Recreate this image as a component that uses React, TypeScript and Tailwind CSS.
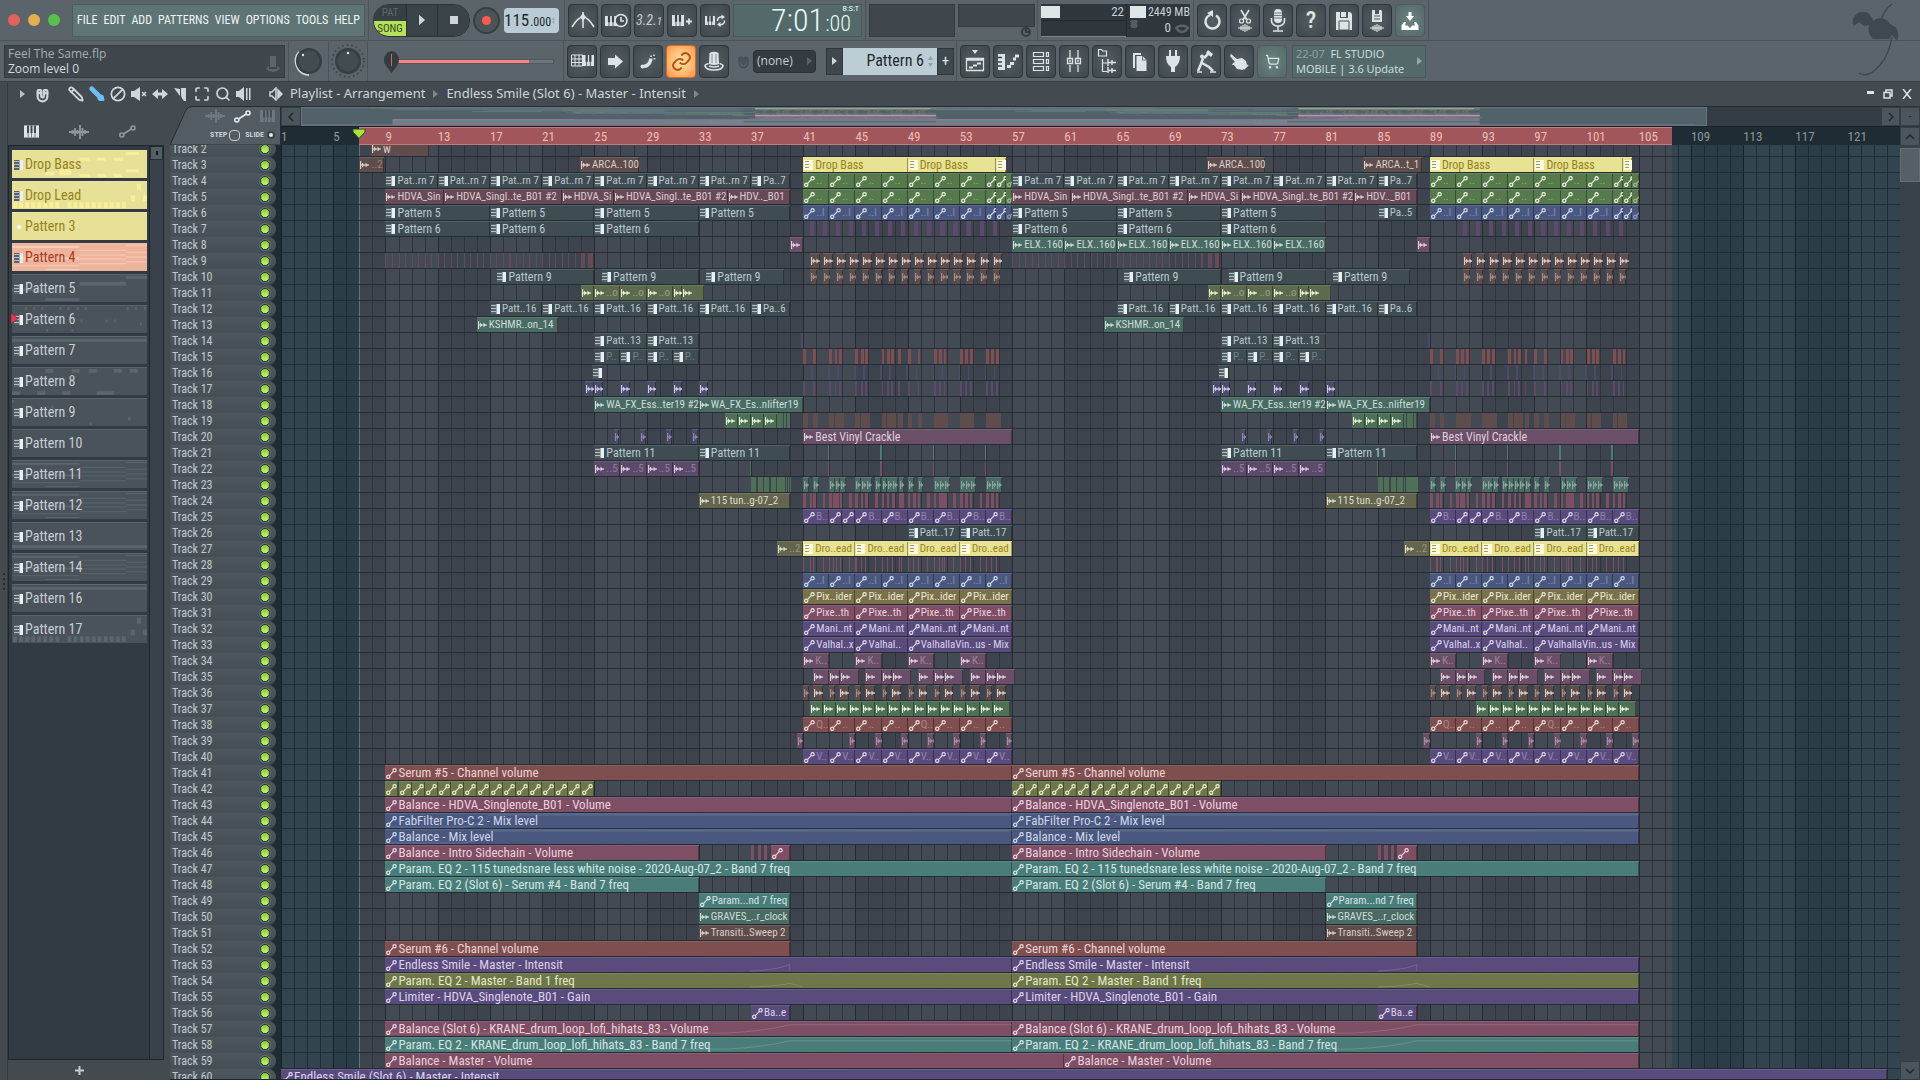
import React, { useState } from 'react';
import { Magnet, Search, Maximize, Ban, Pencil, Brush, ShoppingCart } from 'lucide-react';
import clsx from 'clsx';

const TOTAL_BARS = 124;
const REPEAT = 48;

type Icon = 'pat' | 'aud' | 'aut' | '';

interface Clip {
  track: number;
  start: number;
  len: number;
  tone: string;
  icon: Icon;
  label: string;
  dim?: boolean;
}

// Clip colours: background + text
const TONES: Record<string, string> = {
  slate: 'bg-[#3f4d53] text-[#b9c8cc]',
  brown: 'bg-[#5f4d4c] text-[#d6cbc6]',
  rose: 'bg-[#674a57] text-[#ddc9d0]',
  plum: 'bg-[#6b4f68] text-[#decfdd]',
  violet: 'bg-[#5b4a6a] text-[#d8cbe0]',
  indigo: 'bg-[#4c4c6a] text-[#c8c8e0]',
  purple: 'bg-[#5a4b7d] text-[#d9d2ea]',
  green: 'bg-[#577a4d] text-[#e4f0d8]',
  forest: 'bg-[#4f6f57] text-[#e0f5e0]',
  sea: 'bg-[#4a6b64] text-[#c9dcd6]',
  teal: 'bg-[#4a7d79] text-[#d0e6e2]',
  blue: 'bg-[#4a587f] text-[#ccd6ea]',
  olive: 'bg-[#6d774a] text-[#e4e8c8]',
  khaki: 'bg-[#78714c] text-[#ebe6cc]',
  moss: 'bg-[#5d6a4e] text-[#e8f0d0]',
  stone: 'bg-[#63654f] text-[#dcdcc8]',
  red: 'bg-[#7f4f50] text-[#ecd2d0]',
  magenta: 'bg-[#7d4e64] text-[#ecd0da]',
  yellow: 'bg-[#e8e393] text-[#96811c]',
};

// SVG fills for the overview strip
const FILLS: Record<string, string> = {
  slate: '#6a8790', brown: '#947a76', rose: '#947082', plum: '#a87ca4', violet: '#8a72a6', indigo: '#7676a4',
  purple: '#9884c0', green: '#96b878', forest: '#7aaa82', sea: '#7aa698', teal: '#84b8b4', blue: '#8494c0',
  olive: '#aab47c', khaki: '#bab080', moss: '#92a47c', stone: '#9a9c7c', red: '#b88484', magenta: '#b8809c', yellow: '#e8e393',
};

const clips: Clip[] = [];

const add = (track: number, tone: string, icon: Icon, items: [number, number, string?][], dim = false) => {
  items.forEach(([start, len, label]) => clips.push({ track, start, len, tone, icon, label: label ?? '', dim }));
};

// Adds the same clips in both halves of the song
const both = (track: number, tone: string, icon: Icon, items: [number, number, string?][], dim = false) => {
  add(track, tone, icon, items, dim);
  add(track, tone, icon, items.map(([s, l, t]) => [s + REPEAT, l, t] as [number, number, string?]), dim);
};

const every = (from: number, to: number, step: number, len: number, label = '') => {
  const out: [number, number, string?][] = [];
  for (let b = from; b < to; b += step) out.push([b, len, label]);
  return out;
};

const hits = (starts: number[], len: number) => starts.map((s) => [s, len] as [number, number]);

const KICK = [41, 41.75, 43, 43.4, 43.75, 45, 45.4, 45.75, 47, 47.4, 47.75, 48.25, 49, 49.75, 51, 51.4, 51.75, 53, 53.4, 53.75, 55, 55.4, 55.75];
const SNARE = [41.6, 42.9, 43.6, 44.9, 45.6, 46.9, 47.6, 48.9, 49.6, 50.9, 51.6, 52.9, 53.6, 54.9, 55.6];
const FAST = [41, 41.5, 41.75, 42.5, 43, 43.3, 43.5, 43.8, 44.5, 45, 45.4, 45.75, 46.5, 47, 47.4, 47.8, 48.3, 48.5, 49, 49.4, 49.75, 50.5, 51, 51.4, 51.6, 51.8, 52.5, 53, 53.4, 53.75, 54.5, 55, 55.4, 55.75];

add(2, 'brown', 'aud', [[7.9, 4.4, 'w']]);
add(3, 'brown', 'aud', [[7, 1.9, '..2']], true);
add(3, 'brown', 'aud', [[23.9, 4.5, 'ARCA..100'], [71.9, 4.5, 'ARCA..100'], [83.9, 4.5, 'ARCA..t_1']]);
both(3, 'yellow', 'pat', [[41, 8, 'Drop Bass'], [49, 6.8, 'Drop Bass'], [55.8, 0.7]]);
both(4, 'slate', 'pat', [...every(9, 37, 4, 4, 'Pat..rn 7'), [37, 3, 'Pa..7']]);
both(5, 'rose', 'aud', [[9, 4.5, 'HDVA_Sin'], [13.5, 9, 'HDVA_Singl..te_B01 #2'], [22.5, 4, 'HDVA_Si'], [26.5, 8.7, 'HDVA_Singl..te_B01 #2'], [35.2, 4.8, 'HDV.._B01']]);
for (const t of [4, 5]) both(t, 'green', 'aut', [...every(41, 55, 2, 2, '..'), [55, 0.8], [55.8, 0.7], [56.5, 0.5]], true);
both(6, 'blue', 'aut', [...every(41, 55, 2, 2, '..l'), [55, 0.8], [55.8, 0.7], [56.5, 0.5]], true);
add(6, 'slate', 'pat', [[9, 8, 'Pattern 5'], [17, 8, 'Pattern 5'], [25, 8, 'Pattern 5'], [33, 7, 'Pattern 5']]);
add(6, 'slate', 'pat', [[57, 8, 'Pattern 5'], [65, 8, 'Pattern 5'], [73, 8, 'Pattern 5'], [85, 3, 'Pa..5']]);
both(7, 'slate', 'pat', every(9, 33, 8, 8, 'Pattern 6'));
add(7, 'violet', '', [...every(41.5, 56, 1, 0.32), ...every(91.5, 104, 1, 0.32)]);
both(8, 'plum', 'aud', [[40, 1]]);
add(8, 'sea', 'aud', every(57, 81, 4, 4, 'ELX..160'));
both(9, 'rose', '', [...every(9, 24, 0.5, 0.08), [24, 0.3], [24.5, 0.45]]);
add(9, 'brown', 'aud', [...every(41.5, 56, 1, 0.75), ...every(91.5, 104, 1, 0.75)]);
add(10, 'brown', 'aud', [...every(41.5, 56, 1, 0.55), ...every(91.5, 104, 1, 0.55)], true);
both(10, 'slate', 'pat', [[17.5, 7.5, 'Pattern 9'], [25.5, 7.5, 'Pattern 9'], [33.5, 6, 'Pattern 9']]);
both(11, 'moss', 'aud', [[24, 1], [25, 2, '..o'], [27, 2, '..o'], [29, 2, '..o'], [31, 0.7], [31.7, 1.7]], true);
both(12, 'slate', 'pat', [...every(17, 37, 4, 4, 'Patt..16'), [37, 3, 'Pa..6']]);
both(13, 'sea', 'aud', [[16, 6.2, 'KSHMR..on_14']]);
both(14, 'slate', 'pat', every(25, 33, 4, 4, 'Patt..13'));
both(14, 'indigo', '', [[40.85, 0.12]]);
both(15, 'slate', 'pat', every(25, 33, 2, 2, 'P..'), true);
both(15, 'red', '', hits(KICK, 0.22));
both(16, 'slate', 'pat', [[24.8, 0.8]]);
both(16, 'indigo', '', hits(SNARE, 0.12));
both(17, 'indigo', 'aud', [[24.3, 0.7], [25, 0.7], [27, 0.7], [29, 0.7], [31, 0.7], [33, 0.7]]);
both(17, 'violet', '', hits(KICK, 0.14));
both(18, 'sea', 'aud', [[25, 8, 'WA_FX_Ess..ter19 #2'], [33, 8, 'WA_FX_Es..nlifter19']]);
both(19, 'forest', 'aud', every(35, 39, 1, 1));
both(19, 'forest', '', every(39, 40, 0.25, 0.2));
both(19, 'brown', '', hits(KICK, 0.36));
both(20, 'indigo', 'aud', every(26.5, 33, 2, 0.42), true);
both(20, 'plum', 'aud', [[41, 16, 'Best Vinyl Crackle']]);
both(21, 'slate', 'pat', [[25, 8, 'Pattern 11'], [33, 7, 'Pattern 11']]);
both(21, 'teal', '', hits([42.9, 46.9, 50.9, 54.9], 0.1));
both(22, 'violet', 'aud', every(25, 33, 2, 2, '..5'), true);
both(22, 'forest', '', [[36.95, 0.08]]);
both(22, 'magenta', '', hits([42.9, 46.9, 50.9, 54.9], 0.1));
both(23, 'forest', '', [...every(37, 39, 0.5, 0.4), ...every(39, 40, 0.16, 0.12)]);
both(23, 'sea', 'aud', hits([41, 41.75, 42.95, 43.4, 43.8, 45, 45.4, 45.8, 46.5, 47, 47.4, 47.8, 48.3, 49, 49.75, 51, 51.4, 51.8, 53, 53.4, 53.8, 55, 55.4, 55.8], 0.45), true);
both(24, 'stone', 'aud', [[33, 7, '115 tun..g-07_2']]);
both(24, 'magenta', '', hits(FAST, 0.2));
both(25, 'purple', 'aut', [[41, 2, 'B..'], [43, 1], [44, 1], ...every(45, 57, 2, 2, 'B..')], true);
both(26, 'slate', 'pat', every(49, 57, 4, 4, 'Patt..17'));
both(27, 'stone', 'aud', [[39, 2, '..2']], true);
both(27, 'yellow', 'pat', every(41, 57, 4, 4, 'Dro..ead'));
both(28, 'magenta', '', hits(FAST, 0.08));
both(29, 'blue', 'aut', every(41, 57, 2, 2, '..l'), true);
both(30, 'khaki', 'aut', every(41, 57, 4, 4, 'Pix..ider'));
both(31, 'magenta', 'aut', every(41, 57, 4, 4, 'Pixe..th'));
both(32, 'purple', 'aut', every(41, 57, 4, 4, 'Mani..nt'));
both(33, 'purple', 'aut', [[41, 4, 'Valhal..x'], [45, 4, 'Valhal..'], [49, 8, 'ValhallaVin..us - Mix']]);
both(34, 'plum', 'aud', every(41, 57, 4, 2, 'K..'), true);
for (let b = 41; b < 57; b += 4) {
  both(35, 'plum', 'aud', [[b + 0.75, 1.25], [b + 2, 0.8], [b + 2.8, 1.45]]);
}
for (let b = 41; b < 57; b += 2) {
  both(36, 'brown', 'aud', [[b, 0.45]], true);
  both(36, 'brown', 'aud', [[b + 0.75, 0.75]]);
}
add(37, 'forest', 'aud', [...every(41.5, 55, 1, 1), [55.5, 1.3], ...every(92.5, 103, 1, 1), [103.5, 1.3]]);
both(38, 'red', 'aut', every(41, 57, 8, 2, 'Q..'), true);
both(38, 'red', 'aut', [...every(43, 49, 2, 2, '..'), ...every(51, 57, 2, 2, '..')], true);
both(39, 'plum', 'aud', [[40.5, 0.5], [44.5, 0.5], ...every(46.5, 57, 2, 0.5)], true);
both(40, 'purple', 'aut', every(41, 57, 2, 2, 'V..'), true);
both(41, 'red', 'aut', [[9, 48, 'Serum #5 - Channel volume']]);
both(42, 'olive', 'aut', every(9, 25, 1, 1));
both(43, 'magenta', 'aut', [[9, 48, 'Balance - HDVA_Singlenote_B01 - Volume']]);
both(44, 'blue', 'aut', [[9, 48, 'FabFilter Pro-C 2 - Mix level']]);
both(45, 'blue', 'aut', [[9, 48, 'Balance - Mix level']]);
both(46, 'magenta', 'aut', [[9, 24, 'Balance - Intro Sidechain - Volume'], [38.5, 1.5]]);
both(46, 'magenta', '', [[37, 0.25], [37.5, 0.25], [38, 0.25]]);
both(47, 'teal', 'aut', [[9, 48, 'Param. EQ 2 - 115 tunedsnare less white noise - 2020-Aug-07_2 - Band 7 freq']]);
both(48, 'teal', 'aut', [[9, 24, 'Param. EQ 2 (Slot 6) - Serum #4 - Band 7 freq']]);
both(49, 'teal', 'aut', [[33, 7, 'Param...nd 7 freq']]);
both(50, 'sea', 'aud', [[33, 7, 'GRAVES_..r_clock']]);
both(51, 'brown', 'aud', [[33, 7, 'Transiti..Sweep 2']]);
both(52, 'red', 'aut', [[9, 31, 'Serum #6 - Channel volume']]);
both(53, 'purple', 'aut', [[9, 48, 'Endless Smile - Master - Intensit']]);
both(54, 'olive', 'aut', [[9, 48, 'Param. EQ 2 - Master - Band 1 freq']]);
both(55, 'purple', 'aut', [[9, 48, 'Limiter - HDVA_Singlenote_B01 - Gain']]);
both(56, 'purple', 'aut', [[37, 3, 'Ba..e']]);
both(57, 'magenta', 'aut', [[9, 48, 'Balance (Slot 6) - KRANE_drum_loop_lofi_hihats_83 - Volume']]);
both(58, 'teal', 'aut', [[9, 48, 'Param. EQ 2 - KRANE_drum_loop_lofi_hihats_83 - Band 7 freq']]);
add(59, 'magenta', 'aut', [[9, 52, 'Balance - Master - Volume'], [61, 44, 'Balance - Master - Volume']]);
add(60, 'purple', 'aut', [[1, 123, 'Endless Smile (Slot 6) - Master - Intensit']]);

// Automation envelopes, in a 48 x 15 box
const CURVES: Record<number, string> = {
  44: 'M0 14H6Q7.500 12 8 1H48',
  45: 'M0 14H6Q7.500 12 8 1H48',
  53: 'M28 14Q30 13 31 7V14',
  54: 'M28 14Q30 13 31 10L32 14',
  57: 'M0 12H26Q29 10 31 3H48',
  58: 'M0 12H26Q29 10 31 3H48',
};

const tracks = Array.from({ length: 59 }, (_, i) => i + 2);

/* ---------- pattern browser ---------- */

type Note = [number, number, number, number];

const chords: Note[] = [
  [0, 2, 67, 2], [0, 14, 67, 2], [0, 22, 67, 1], [67, 6, 46, 1], [67, 11, 46, 1], [67, 15, 46, 1], [67, 20, 46, 1],
  [113, 1, 21, 1], [113, 8, 21, 1], [113, 13, 21, 1], [113, 18, 21, 1], [33, 26, 34, 1],
];
const lead: Note[] = [
  ...Array.from({ length: 19 }, (_, i) => [1 + i * 6, 21, 4, 6] as Note).filter((_, i) => i !== 8),
  [118, 14, 4, 6], [124, 2, 4, 6], [130, 14, 4, 6],
];
const patterns: { name: string; tone: 'yellow' | 'salmon' | 'slate'; notes: Note[] }[] = [
  { name: 'Drop Bass', tone: 'yellow', notes: [[0, 14, 9, 3], [33, 22, 9, 3], [47, 19, 12, 6], [67, 7, 10, 3], [84, 7, 9, 3], [101, 7, 9, 3], [113, 1, 13, 3], [67, 24, 10, 3], [84, 24, 9, 3], [101, 24, 8, 3], [113, 19, 13, 3]] },
  { name: 'Drop Lead', tone: 'yellow', notes: lead },
  { name: 'Pattern 3', tone: 'yellow', notes: [] },
  { name: 'Pattern 4', tone: 'salmon', notes: chords },
  { name: 'Pattern 5', tone: 'slate', notes: [[0, 14, 33, 3], [33, 24, 34, 3], [67, 7, 46, 4], [113, 1, 21, 3]] },
  { name: 'Pattern 6', tone: 'slate', notes: [...[13, 21, 29, 47, 55, 64, 72, 114, 122, 131].map((x) => [x, 1, 2, 3] as Note), [68, 14, 2, 3], [93, 14, 2, 3], [101, 14, 2, 3], [127, 17, 2, 3], [26, 17, 2, 3], [34, 24, 2, 3], [59, 24, 2, 3]] },
  { name: 'Pattern 7', tone: 'slate', notes: [[0, 2, 134, 3]] },
  { name: 'Pattern 8', tone: 'slate', notes: [[33, 1, 8, 4], [59, 1, 8, 4], [76, 1, 8, 4], [101, 1, 8, 4], [117, 1, 8, 4], [0, 24, 8, 4], [25, 24, 8, 4], [50, 24, 8, 4], [84, 24, 17, 4]] },
  { name: 'Pattern 9', tone: 'slate', notes: [[0, 1, 2, 3], [39, 7, 2, 3], [115, 19, 3, 3], [77, 24, 2, 3]] },
  { name: 'Pattern 10', tone: 'slate', notes: [] },
  { name: 'Pattern 11', tone: 'slate', notes: chords },
  { name: 'Pattern 12', tone: 'slate', notes: chords },
  { name: 'Pattern 13', tone: 'slate', notes: [[0, 23, 134, 3]] },
  { name: 'Pattern 14', tone: 'slate', notes: chords },
  { name: 'Pattern 16', tone: 'slate', notes: [[0, 2, 134, 3]] },
  { name: 'Pattern 17', tone: 'slate', notes: lead },
];

/* ---------- icons ---------- */

const PatGlyph = () => (
  <svg viewBox="0 0 9 10" className="w-[9px] h-[10px] shrink-0">
    <path d="M0 0h6v10H0z" fill="#56646a" />
    <path d="M0 1.500h5M0 4.500h5M0 7.500h5" stroke="#b4c0c5" />
    <path d="M5.500 0H9v10H5.500z" fill="#e8f0f2" />
  </svg>
);

// Same glyph for clips on a bright background
const PatGlyphLight = () => (
  <svg viewBox="0 0 9 10" className="w-[9px] h-[10px] shrink-0">
    <path d="M0 0h9v10H0z" fill="#fffbe0" />
    <path d="M1 1.500h4M1 4.500h4M1 7.500h4" stroke="#a39a5c" />
  </svg>
);

const AudGlyph = () => (
  <svg viewBox="0 0 9 8" className="w-[9px] h-2 shrink-0">
    <path d="M.6 0v8" stroke="currentColor" strokeWidth="1.2" />
    <path d="M1 4h8" stroke="currentColor" strokeWidth="1.2" />
    <path d="M2 1.500L4.500 4L2 6.500zM5.500 1.500L8 4L5.500 6.500z" fill="currentColor" />
  </svg>
);

const AutGlyph = () => (
  <svg viewBox="0 0 11 11" className="w-[11px] h-[11px] shrink-0" fill="none" stroke="currentColor" strokeWidth="1.3">
    <circle cx="2.2" cy="8.8" r="1.6" />
    <circle cx="8.6" cy="2.2" r="1.6" />
    <path d="M3.4 7.6L7.4 3.4" />
  </svg>
);

const Piano = ({ x, y, w, h }: { x: number; y: number; w: number; h: number }) => (
  <g>
    <rect x={x} y={y} width={w} height={h} fill="#dde4e6" stroke="none" />
    <path
      d={`M${x + w / 3} ${y}v${h * 0.62}M${x + (2 * w) / 3} ${y}v${h * 0.62}`}
      stroke="#3b4448"
      strokeWidth="2.2"
    />
    <path d={`M${x + w / 3} ${y}v${h}M${x + (2 * w) / 3} ${y}v${h}`} stroke="#3b4448" strokeWidth=".8" />
  </g>
);

const Art = ({ children }: { children: React.ReactNode }) => (
  <svg viewBox="0 0 30 33" className="w-[30px] h-[33px] shrink-0" fill="none" stroke="#dde4e6" strokeWidth="1.6">
    {children}
  </svg>
);

const F = '#dde4e6';

const ToolButton = ({ label, tone = 'dark', children }: { label: string; tone?: string; children: React.ReactNode }) => (
  <button
    aria-label={label}
    className={clsx(
      'w-[30px] h-[33px] shrink-0 rounded-sm border flex items-center justify-center overflow-hidden',
      tone === 'dark' && 'bg-[#454e52] border-[#2f373c] bg-radial from-[#555e62] to-[#3e474b]',
      tone === 'teal' && 'border-[#4a5b5d] bg-radial from-[#6c8583] to-[#546867]',
      tone === 'orange' && 'border-[#d96a1c] bg-radial from-[#ffe9a6] to-[#fb9545]'
    )}
  >
    {children}
  </button>
);

const Divider = () => <div className="w-px self-stretch bg-[#4b5459] shrink-0" />;

const Arrow = ({ className }: { className?: string }) => (
  <svg viewBox="0 0 5 8" className={clsx('w-[5px] h-2 shrink-0', className)} fill="currentColor"><path d="M0 0L5 4L0 8z" /></svg>
);

const Wave = ({ className }: { className?: string }) => (
  <svg viewBox="0 0 20 14" className={className} stroke="currentColor" strokeWidth="1.8">
    <path d="M0 7h20M3.500 5v4M6 3v8M8.500 5v4M11 0v14M13.500 3v8M16 5v4" />
  </svg>
);

const Keys = ({ className }: { className?: string }) => (
  <svg viewBox="0 0 16 13" className={className} fill="currentColor">
    <path d="M0 0h16v13H0z" />
    <path d="M3.200 0h2.200v8H3.200zM6.900 0h2.200v8H6.900zM10.600 0h2.200v8h-2.200z" fill="#444d52" />
    <path d="M4 8h.7v5H4zM7.700 8h.7v5h-.7zM11.400 8h.7v5h-.7z" fill="#444d52" />
  </svg>
);

const Nodes = ({ className }: { className?: string }) => (
  <svg viewBox="0 0 17 13" className={className} fill="none" stroke="currentColor" strokeWidth="1.6">
    <circle cx="2.800" cy="10" r="2" />
    <circle cx="14" cy="3" r="2" />
    <path d="M4.500 9L12.300 4" />
  </svg>
);

/* ---------- top bars ---------- */

const TransportRow = () => (
  <div className="flex items-center h-[41px] border-b border-[#4b5459]">
    <div className="w-[368px] shrink-0 flex items-center pl-2 gap-2">
      {['bg-[#e0635a]', 'bg-[#e5b04c]', 'bg-[#57c14e]'].map((c) => (
        <button key={c} aria-label="Window" className={clsx('size-3 rounded-full', c)} />
      ))}
      <nav className="ml-1 w-[293px] h-[33px] bg-[#5f7474] border border-[#4c5d5e] flex items-center justify-between px-1 text-[12px] text-[#eff7f6]">
        {['FILE', 'EDIT', 'ADD', 'PATTERNS', 'VIEW', 'OPTIONS', 'TOOLS', 'HELP'].map((m) => (
          <button key={m}>{m}</button>
        ))}
      </nav>
    </div>
    <Divider />
    <div className="w-[195px] shrink-0 flex items-center pl-1">
      <div className="flex h-[33px] rounded-2xl overflow-hidden border border-[#2c3338]">
        <button className="w-[32px] flex flex-col text-[11px] leading-4 text-[#5f686d] bg-[#363f44]">
          <span className="w-full h-4">PAT</span>
          <span className="w-full h-4 bg-[#b4e35a] text-[#33481a]">SONG</span>
        </button>
        <button aria-label="Play" className="w-[31px] bg-[#3a4348] border-l border-[#2c3338] flex items-center justify-center">
          <svg viewBox="0 0 8 12" className="w-[7px] h-3" fill="#cfd6d8"><path d="M0 0L7 6L0 12z" /></svg>
        </button>
        <button aria-label="Stop" className="w-[32px] bg-[#3a4348] border-l border-[#2c3338] flex items-center justify-center">
          <span className="size-2 bg-[#cfd6d8]" />
        </button>
      </div>
      <button aria-label="Record" className="ml-[3px] size-[27px] rounded-full bg-[#4b5459] border-2 border-[#353e43] flex items-center justify-center">
        <span className="size-[9px] rounded-full bg-[#ff5a50]" />
      </button>
      <div className="ml-1 w-[55px] h-[25px] rounded bg-[#b9cbd4] text-[#1f2a30] flex items-baseline justify-end gap-px pr-1">
        <span className="text-[17px] leading-[25px]">115</span>
        <span className="text-[12px]">.000</span>
        <svg viewBox="0 0 5 11" className="w-[5px] h-[11px] self-center" fill="#8fa0a8"><path d="M2.500 0L5 4H0zM0 7h5L2.500 11z" /></svg>
      </div>
    </div>
    <Divider />
    <div className="flex items-center gap-[3px] pl-[3px] pr-[3px] shrink-0">
      <ToolButton label="Metronome">
        <Art>
          <path d="M4 23Q10 13 15 13Q20 13 26 23" />
          <path d="M15 8v16" />
          <path d="M15 9l3 4l-3 4l-3-4z" fill={F} stroke="none" />
        </Art>
      </ToolButton>
      <ToolButton label="Wait for input">
        <Art>
          <Piano x={4} y={12} w={12} h={10} />
          <circle cx="20" cy="16.500" r="6" fill="#444d52" />
          <path d="M20 13v4h3" />
        </Art>
      </ToolButton>
      <ToolButton label="Countdown">
        <span className="italic text-[14px] text-[#c6cdd0]">3.2.<span className="text-[11px]">1</span></span>
      </ToolButton>
      <ToolButton label="Overdub">
        <Art>
          <Piano x={5} y={11} w={12} h={11} />
          <path d="M19 17.500h6M22 14.500v6" strokeWidth="1.800" />
        </Art>
      </ToolButton>
      <ToolButton label="Loop record">
        <Art>
          <Piano x={5} y={12} w={10} h={9} />
          <path d="M17.500 17v-1a3.800 3.800 0 0 1 5-3M24.500 16.500v1a3.800 3.800 0 0 1-5 3" />
          <path d="M21.500 10.500l3.500 2.500l-3.500 2.500zM20.500 18l-3.500 2.500l3.500 2.500z" fill={F} stroke="none" />
        </Art>
      </ToolButton>
      <div className="w-[129px] h-[33px] bg-[#54696a] border border-[#48595b] text-[#e6fbf8] flex items-start justify-end gap-px pr-[2px]">
        <span className="text-[32px] leading-[31px] font-light">7:01</span>
        <span className="flex flex-col items-end">
          <span className="text-[8px] leading-[8px]">B:S:T</span>
          <span className="text-[22px] leading-[22px] font-light pr-2">:00</span>
        </span>
      </div>
    </div>
    <Divider />
    <div className="flex items-start gap-[3px] pl-[3px] w-[171px] h-[33px] shrink-0">
      <div className="w-[86px] h-[33px] bg-[#3f474d] border border-[#343c42]" />
      <div className="w-[77px] flex flex-col items-end">
        <div className="w-full h-[23px] bg-[#3f474d] border border-[#343c42]" />
        <svg viewBox="0 0 12 10" className="w-3 h-[10px] mr-[3px]" fill="none" stroke="#343c42" strokeWidth="2">
          <circle cx="6" cy="5" r="4" />
          <path d="M6 1v4h4" />
        </svg>
      </div>
    </div>
    <Divider />
    <div className="pl-[3px] pr-[3px] shrink-0">
      <div className="flex w-[149px] h-[33px] bg-[#2f363c] text-[#c9d3d6] text-[13px] leading-4">
        <div className="w-[86px] flex flex-col border-r border-[#242a2f]">
          <div className="flex justify-between h-4 pr-[2px]"><span className="w-[19px] h-3 mt-[2px] bg-[#dfe6e8]" />22</div>
          <div className="flex-1 border-t border-[#242a2f] border-b border-b-[#7c868a]" />
        </div>
        <div className="flex-1 pl-[3px]">
          <div className="flex justify-between h-4"><span className="w-4 h-3 mt-[2px] bg-[#dfe6e8] shrink-0" /><span className="text-[12px] whitespace-nowrap">2449 MB</span></div>
          <div className="flex items-center justify-end gap-1 h-[17px]">
            <svg viewBox="0 0 8 8" className="size-2 mr-auto mb-2" fill="#525c62"><path d="M1 0h6v8H1zM0 1h8v1H0zM0 5h8v1H0z" /></svg>
            0
            <svg viewBox="0 0 14 9" className="w-[14px] h-[9px] mr-px" fill="none" stroke="#59636a" strokeWidth="2.500"><path d="M1 4Q4 1 7 2Q10 1 13 4Q10 8 7 8Q4 8 1 4z" /></svg>
          </div>
        </div>
      </div>
    </div>
    <Divider />
    <div className="flex items-center gap-[3px] pl-[3px] pr-[3px] shrink-0 text-[#dde4e6]">
      <ToolButton label="Undo">
        <Art>
          <path d="M19 11.500a7 7 0 1 1-6-.5" strokeWidth="2.400" />
          <path d="M10 9l6-3v7z" fill={F} stroke="none" />
        </Art>
      </ToolButton>
      <ToolButton label="Cut">
        <Art>
          <path d="M11 6l6 10M19 6l-6 10" />
          <circle cx="11.500" cy="17" r="2" strokeWidth="1.200" /><circle cx="18.500" cy="17" r="2" strokeWidth="1.200" />
          <path d="M8 24h14M11 22v4M13 21v6M15 20v8M17 21v6M19 22v4" strokeWidth="1.200" />
        </Art>
      </ToolButton>
      <ToolButton label="Record audio">
        <Art>
          <rect x="11" y="5" width="8" height="14" rx="4" fill={F} stroke="none" />
          <path d="M11 9h8M11 11.500h8M11 14h8" stroke="#59636a" strokeWidth=".8" />
          <path d="M8.500 14v3a6.500 5 0 0 0 13 0v-3M15 22v4M10 27h10" />
        </Art>
      </ToolButton>
      <ToolButton label="Help"><span className="text-[24px] leading-none font-medium">?</span></ToolButton>
      <ToolButton label="Save">
        <Art>
          <path d="M7 8h4v6h8V8h2l2 2v16H7z" fill={F} stroke="none" />
          <path d="M12 8h5v5h-5z" fill={F} stroke="none" />
          <path d="M10 17h10v9H10z" stroke="#4a5357" strokeWidth="1" />
        </Art>
      </ToolButton>
      <ToolButton label="Save new version">
        <Art>
          <path d="M10 6h3v4h4V6h2l1 1v11H10z" fill={F} stroke="none" />
          <path d="M12 12h6M12 15h6" stroke="#4a5357" strokeWidth="1" />
          <path d="M8 24h14M11 22v4M13 21v6M15 20v8M17 21v6M19 22v4" strokeWidth="1.200" />
        </Art>
      </ToolButton>
      <ToolButton label="Export" tone="teal">
        <Art>
          <path d="M15 8v5" stroke="#fff" strokeWidth="3" />
          <path d="M11 12h8l-4 5z" fill="#fff" stroke="none" />
          <path d="M9 18l-2.500 3.500V26h17v-4.500L21 18h-2l1 3.500h-3l-1 2h-2l-1-2h-3L11 18z" fill="#fff" stroke="none" />
        </Art>
      </ToolButton>
    </div>
    <Divider />
  </div>
);

const Knob = ({ ring }: { ring: boolean }) => (
  <svg viewBox="0 0 36 36" className="size-9">
    {ring ? (
      <circle cx="18" cy="18" r="16" fill="none" stroke="#3c454a" strokeWidth="2" strokeDasharray="1.500 3.100" />
    ) : (
      <path d="M8 9A14 14 0 0 0 18 32" fill="none" stroke="#ccd5d8" strokeWidth="2" />
    )}
    <circle cx="18" cy="18" r="13" fill="#363f44" />
    <circle cx="18" cy="18" r="10.500" fill="#434c51" />
    <circle cx={ring ? 18 : 12} cy={ring ? 10 : 12} r="1.200" fill="#dde4e6" />
  </svg>
);

const PatternRow = () => {
  const [pos, setPos] = useState(5);
  return (
    <div className="flex items-center h-[41px] border-b border-[#3a4348]">
      <div className="w-[288px] shrink-0 pl-1">
        <div className="relative w-[281px] h-[33px] bg-[#3f474c] border border-[#343c41] pl-[3px] text-[12px] leading-[15px] font-['Open_Sans',sans-serif]">
          <p className="text-[#a3adb1]">Feel The Same.flp</p>
          <p className="text-[#d3dbde]">Zoom level 0</p>
          <svg viewBox="0 0 14 18" className="absolute right-1 bottom-1 w-[14px] h-[18px]" fill="#5b656a"><path d="M4 1h6v11H4zM0 14q2-3 3-3v3h8v-3q2 0 3 3q-7 6-14 0" /></svg>
        </div>
      </div>
      <Divider />
      <div className="w-[39px] shrink-0 flex justify-center"><Knob ring={false} /></div>
      <Divider />
      <div className="w-[38px] shrink-0 flex justify-center"><Knob ring /></div>
      <Divider />
      <div className="w-[195px] shrink-0 relative pl-4 pr-[9px]">
        <div className="h-[5px] bg-[#6d767b] border border-[#4f585d] flex"><div className="w-[86%] bg-[#ff8481]" /></div>
        <input
          type="range"
          aria-label="Song position"
          min={0}
          max={100}
          value={pos}
          onChange={(e) => setPos(Number(e.target.value))}
          className="absolute inset-x-4 -top-2 h-5 opacity-0"
        />
        <svg viewBox="0 0 15 22" className="absolute left-4 -top-2 w-[15px] h-[22px] pointer-events-none">
          <ellipse cx="7.500" cy="9" rx="7.500" ry="9" fill="#343c41" />
          <path d="M3 16h9l-4.500 6z" fill="#343c41" />
          <path d="M7.500 3v12" stroke="#c96a68" />
        </svg>
      </div>
      <Divider />
      <div className="flex items-center gap-[3px] pl-[3px] w-[392px] shrink-0">
        <ToolButton label="Typing keyboard">
          <Art>
            <path d="M4.500 10h11v11h-11zM8 10v11M12 10v11M4 14h12M4 17.500h12" strokeWidth="1" />
            <Piano x={16} y={10} w={11} h={11} />
          </Art>
        </ToolButton>
        <ToolButton label="Step edit"><Art><path d="M8 13h7V9.500l8 7l-8 7V20H8z" fill={F} stroke="none" /></Art></ToolButton>
        <ToolButton label="Note glide">
          <Art>
            <path d="M11 21.500q6-1 7-8" strokeWidth="3.500" />
            <circle cx="9.500" cy="21.500" r="2" fill={F} stroke="none" />
            <path d="M18 10.500v1.500M21 9.500v1.500M21.500 13v1.500" />
          </Art>
        </ToolButton>
        <ToolButton label="Link controllers" tone="orange">
          <svg viewBox="0 0 24 24" className="size-[21px]" fill="none" stroke="#b8500f" strokeWidth="2.200">
            <path d="M10 13a5 5 0 0 0 7.500.5l3-3a5 5 0 0 0-7-7l-1.700 1.700" />
            <path d="M14 11a5 5 0 0 0-7.500-.5l-3 3a5 5 0 0 0 7 7l1.700-1.700" />
          </svg>
        </ToolButton>
        <ToolButton label="Multilink">
          <Art>
            <path d="M10.500 8q4.500-2.500 9 0l.5 11q-5 2-10 0z" fill={F} stroke="none" />
            <path d="M13 9v9M17 9v9" stroke="#6d767b" strokeWidth=".8" />
            <path d="M9.500 18.500Q6 19.500 6 21q1 4 9 4t9-4q0-1.500-3.500-2.500" />
            <path d="M10 21q5 2 10 0" />
          </Art>
        </ToolButton>
        <Magnet size={13} strokeWidth={4} className="ml-[5px] rotate-[135deg] text-[#485157]" />
        <button className="w-[63px] h-[23px] rounded-sm bg-[#343c41] border border-[#2b3237] text-[#c4cdd1] text-[12px] flex items-center justify-between px-[3px] font-['Open_Sans',sans-serif]">
          (none)
          <Arrow className="text-[#59636a]" />
        </button>
        <div className="ml-[7px] flex h-[27px]">
          <button aria-label="Pattern menu" className="w-[17px] bg-[#3f484d] border border-[#2f373c] flex items-center justify-center">
            <Arrow className="text-[#cfd6d8]" />
          </button>
          <div className="w-[94px] bg-[#bccdd5] text-[#1f2a30] text-[16px] flex items-center justify-end gap-1 pr-1">
            Pattern 6
            <svg viewBox="0 0 5 11" className="w-[5px] h-[11px]" fill="#8fa0a8"><path d="M2.500 0L5 4H0zM0 7h5L2.500 11z" /></svg>
          </div>
          <button className="w-[17px] bg-[#3f484d] border border-[#2f373c] text-[15px] leading-none text-[#dde4e6]">+</button>
        </div>
      </div>
      <Divider />
      <div className="flex items-center gap-[3px] pl-[3px] pr-[5px] shrink-0 text-[#dde4e6]">
        <ToolButton label="Playlist"><Art><path d="M12 5h6l-3 4z" fill={F} stroke="none" /><path d="M6.500 13.500h17v12h-17zM6 15h18" strokeWidth="1.300" /><path d="M9 22.500h4M13 20.500h4M17 18.500h4" strokeWidth="1.800" /></Art></ToolButton>
        <ToolButton label="Piano roll"><Art><path d="M5 9h7v16H5z" fill={F} stroke="none" /><path d="M5 12.500h4M5 17h4M5 21h4" stroke="#3b4448" strokeWidth="1.600" /><path d="M14 21.500h4M17 18.500h4M20 14h3M22 11h4" strokeWidth="3" /></Art></ToolButton>
        <ToolButton label="Channel rack"><Art><path d="M7.500 7.500h10v4h-10zM7.500 14.500h10v4h-10zM7.500 21.500h10v4h-10zM20.500 7.500h2v4h-2zM20.500 14.500h2v4h-2zM20.500 21.500h2v4h-2z" strokeWidth="1.200" /></Art></ToolButton>
        <ToolButton label="Mixer"><Art><path d="M11 5v8M11 20v7M19 5v8M19 20v7" strokeWidth="1.300" /><path d="M8.500 13.500h5v5h-5zM16.500 13.500h5v5h-5z" strokeWidth="1.300" /><path d="M10 16h2M18 16h2" /></Art></ToolButton>
        <ToolButton label="Browser"><Art><path d="M6.500 4.500h3l1 1.500h4v5h-8zM10.500 14v12.500h5M10.500 18h5" strokeWidth="1.200" /><path d="M16 14v7M16 22v6M16 17.500h8M16 25.500h8M20 15v5M20 23v5" strokeWidth="1.400" /></Art></ToolButton>
        <ToolButton label="Picker"><Art><path d="M8 8h8v2h-6v13H8z" fill={F} stroke="none" /><path d="M11.500 11h6l4 4v11h-10z" fill={F} stroke="none" /><path d="M17.500 11v4h4" stroke="#4a5357" strokeWidth=".8" /></Art></ToolButton>
        <ToolButton label="Plugins"><Art><path d="M12 5v6M18 5v6" strokeWidth="2" /><path d="M8 11h14q0 8-5 11v5h-4v-5q-5-3-5-11" fill={F} stroke="none" /></Art></ToolButton>
        <ToolButton label="Tools">
          <Art>
            <path d="M17 5l5 4l-2 3l-5-4z" fill={F} stroke="none" />
            <path d="M17 9l-4 4" strokeWidth="2.500" />
            <circle cx="11" cy="11.500" r="2" fill={F} stroke="none" />
            <path d="M12 13l-2 6l-3 7M11 18l7 4l4 4" strokeWidth="2.500" />
            <path d="M6 27h5M19 27h6" strokeWidth="1.500" />
          </Art>
        </ToolButton>
        <ToolButton label="Touch"><Art><path d="M7 9l6 5l5-1l4 3l1 4l-4 5l-6-1l-3-4h-2l1-2l2-1l-5-6z" fill={F} stroke="none" /><path d="M20 24l4-4" /></Art></ToolButton>
        <ToolButton label="Shop" tone="teal"><ShoppingCart size={15} /></ToolButton>
      </div>
      <button className="w-[134px] h-[33px] shrink-0 bg-[#54696a] border border-[#48595b] flex items-center justify-between text-left px-[3px] text-[11px] leading-[15px] text-[#d3e2e0] font-['Open_Sans',sans-serif]">
        <span>
          <span className="text-[#93a6a6]">22-07</span>&nbsp; FL STUDIO<br />MOBILE | 3.6 Update
        </span>
        <Arrow className="text-[#94a6a6]" />
      </button>
    </div>
  );
};

/* ---------- playlist ---------- */

const TitleBar = () => (
  <div className="flex items-center h-6 text-[#cfd7da] pr-2">
    <div className="flex items-center pl-3 shrink-0">
      <Arrow className="text-[#b6c0c4]" />
      <Magnet size={15} strokeWidth={3.500} className="ml-[10px] rotate-[135deg]" />
    </div>
    <div className="flex items-center gap-[5px] ml-[18px] shrink-0">
      <Pencil size={16} strokeWidth={2.800} className="-scale-x-100" />
      <Brush size={16} strokeWidth={2.800} className="-scale-x-100 text-[#6cc0f5] fill-[#6cc0f5]" />
      <Ban size={16} strokeWidth={2.600} className="rotate-90" />
      <svg viewBox="0 0 16 16" className="size-4" fill="currentColor"><path d="M0 5h3l6-4v14l-6-4H0z" /><path d="M11 6l4 4M15 6l-4 4" stroke="currentColor" strokeWidth="1.500" /></svg>
      <svg viewBox="0 0 16 16" className="size-4" fill="currentColor"><path d="M0 8l6-5v3.500h4V3l6 5l-6 5V9.500H6V13z" /></svg>
      <svg viewBox="0 0 16 16" className="size-4" fill="currentColor"><path d="M1 2l6 1v7zM8 2h5v13h-2q-3-3-3-6z" /></svg>
      <Maximize size={16} strokeWidth={2.500} />
      <Search size={16} strokeWidth={2.500} />
      <svg viewBox="0 0 16 16" className="size-4" fill="currentColor"><path d="M0 5h3l5-4v14l-5-4H0zM10 2h1.500v12H10zM13 2h1.500v12H13z" /></svg>
    </div>
    <svg viewBox="0 0 14 14" className="size-[14px] ml-[17px] shrink-0" fill="none" stroke="currentColor" strokeWidth="1.500"><path d="M1 5h2l4-4v12L3 9H1z" /><path d="M9 3l4 4l-4 4z" fill="currentColor" /></svg>
    <h1 className="ml-[7px] flex items-center gap-2 text-[13px] font-['Noto_Sans',sans-serif] whitespace-nowrap">
      Playlist - Arrangement
      <Arrow className="text-[#7d888d]" />
      Endless Smile (Slot 6) - Master - Intensit
      <Arrow className="text-[#7d888d]" />
    </h1>
    <div className="ml-auto flex items-center gap-[9px]">
      <button aria-label="Minimize" className="w-[7px] h-[3px] mb-1 bg-[#dde4e6]" />
      <button aria-label="Restore">
        <svg viewBox="0 0 10 10" className="size-[10px]" fill="none" stroke="#dde4e6" strokeWidth="1.500"><path d="M3 3V1h6v6H7M1 3.500h6v5.500H1z" /></svg>
      </button>
      <button aria-label="Close">
        <svg viewBox="0 0 10 10" className="size-[10px]" stroke="#dde4e6" strokeWidth="1.500"><path d="M1 0l8 10M9 0L1 10" /></svg>
      </button>
    </div>
  </div>
);

const tileTone = {
  yellow: 'bg-[#e6e196] text-[#96811c]',
  salmon: 'bg-[#eeb39b] text-[#a83a1e]',
  slate: 'bg-[#4a535a] text-[#c6cfd3]',
};

const PatternBrowser = () => (
  <aside className="w-[162px] shrink-0 flex flex-col">
    <div className="h-[39px] flex items-center text-[#8f9a9f] pt-3">
      <Keys className="w-[15px] h-[13px] ml-4 text-[#dde4e6]" />
      <Wave className="w-5 h-[14px] ml-[30px]" />
      <Nodes className="w-[17px] h-[13px] ml-[30px]" />
    </div>
    <div className="w-[156px] flex-1 flex border border-[#1e272d] bg-[#323b43] min-h-0">
      <ul className="w-[141px] pl-[3px] pr-[2px] pt-1 flex flex-col gap-[3px] border-r border-[#1e272d]">
        {patterns.map((p) => (
          <li key={p.name} className="relative">
            <button className={clsx('relative w-full h-7 flex items-center gap-[2px] pl-[2px] text-[14px] overflow-hidden border-t border-white/10', tileTone[p.tone])}>
              <svg viewBox="0 0 134 28" preserveAspectRatio="none" className="absolute inset-0 w-full h-full" fill={p.tone === 'slate' ? '#5b656c' : p.tone === 'yellow' ? '#f9ef9b' : '#f7cdb6'}>
                {p.notes.map(([x, y, w, h], i) => <rect key={i} x={x} y={y} width={w} height={h} />)}
              </svg>
              <span className="relative flex w-[9px] justify-center">
                {p.name === 'Pattern 3' ? <span className="size-1 rounded-full bg-white" /> : <PatGlyph />}
              </span>
              <span className="relative">{p.name}</span>
            </button>
            {p.name === 'Pattern 6' && (
              <svg viewBox="0 0 7 11" className="absolute -left-px top-2 w-[7px] h-[11px]" fill="#e8384f" stroke="#7c1c2a" strokeWidth=".6"><path d="M0 0L7 5.500L0 11z" /></svg>
            )}
          </li>
        ))}
      </ul>
      <div className="flex-1 bg-[#39424a]">
        <div className="h-[14px] bg-[#535d64] border border-[#262e34] flex items-center justify-center"><span className="w-[2px] h-1 bg-[#14191c]" /></div>
      </div>
    </div>
    <button aria-label="Add pattern" className="h-5 w-[142px] flex items-center justify-center">
      <svg viewBox="0 0 9 9" className="size-[9px]" stroke="#c2cbcf" strokeWidth="2"><path d="M4.500 0v9M0 4.500h9" /></svg>
    </button>
  </aside>
);

const ClipView = ({ clip }: { clip: Clip }) => (
  <div
    className={clsx(
      'absolute top-0 h-[15px] flex items-center overflow-hidden whitespace-nowrap leading-[14px]',
      TONES[clip.tone],
      clip.len >= 24 ? 'text-[13px]' : clip.label.includes('.') || clip.label.includes('_') ? 'text-[11px]' : 'text-[12px]',
      clip.icon !== '' && 'border-t border-white/10',
      clip.icon === 'aut' ? 'gap-px pl-px' : clip.icon !== '' && 'gap-[2px] pl-px',
      clip.len > 0.4 && 'shadow-[inset_-1px_0_0_rgba(0,0,0,0.35)]'
    )}
    style={{
      left: `${((clip.start - 1) / TOTAL_BARS) * 100}%`,
      width: `${(clip.len / TOTAL_BARS) * 100}%`,
    }}
  >
    {clip.len >= 44 && CURVES[clip.track] && (
      <svg viewBox="0 0 48 15" preserveAspectRatio="none" className="absolute inset-0 w-full h-full" fill="none" stroke="currentColor" strokeOpacity=".2">
        <path d={CURVES[clip.track]} vectorEffect="non-scaling-stroke" />
      </svg>
    )}
    {clip.icon !== '' && (
      <span className={clsx('shrink-0', clip.len < 0.6 && 'opacity-50')}>
        {clip.icon === 'pat' && (clip.tone === 'yellow' ? <PatGlyphLight /> : <PatGlyph />)}
        {clip.icon === 'aud' && <AudGlyph />}
        {clip.icon === 'aut' && <AutGlyph />}
      </span>
    )}
    {clip.label && <span className={clsx(clip.dim && 'opacity-40')}>{clip.label}</span>}
  </div>
);

const TrackRow = ({ n }: { n: number }) => (
  <div className="flex h-4 shrink-0">
    <div className="w-[111px] shrink-0 flex bg-[#1f2c33]">
      <div className="w-[106px] h-4 rounded-r-full bg-[#4a535a] bg-linear-to-b from-[#4e575e] to-[#454e54] flex items-center justify-between pl-[2px] pr-[6px] text-[12px] leading-4 text-[#c0c9cc]">
        <span>Track {n}</span>
        <button aria-label={`Track ${n} on`} className="size-[10px] rounded-full bg-[#9be03c] bg-linear-to-b from-[#86cf2c] to-[#c3f57c] border border-[#26331b] ring-1 ring-[#636d72]" />
      </div>
    </div>
    <div className="relative flex-1 border-b border-[#1d272e]/80">
      {clips.filter((c) => c.track === n).map((c, i) => <ClipView key={i} clip={c} />)}
    </div>
  </div>
);

// Bar columns shaded in alternating groups of four
const Grid = () => (
  <div className="absolute inset-y-0 right-0 left-[111px] flex">
    {Array.from({ length: 31 }, (_, g) => (
      <div key={g} className={clsx('flex-1 flex', g % 2 ? 'bg-[#2b3e48]' : 'bg-[#32454f]')}>
        {[0, 1, 2, 3].map((b) => (
          <div key={b} className={clsx('flex-1 border-l', b === 0 ? 'border-[#14212a]' : 'border-[#1c2b34]')} />
        ))}
      </div>
    ))}
    <div
      className="absolute inset-y-0 bg-[#e58080]/10 border-l border-[#8d9aa0]/60"
      style={{ left: `${(6 / TOTAL_BARS) * 100}%`, width: `${(100.5 / TOTAL_BARS) * 100}%` }}
    />
  </div>
);

const Ruler = () => (
  <div className="relative flex flex-1 h-5 bg-[#1f2c34] border-y border-[#182127] text-[13px] leading-[20px]">
    <div
      className="absolute inset-y-0 bg-[#a0565a] border-y border-[#c4797a]"
      style={{ left: `${(6 / TOTAL_BARS) * 100}%`, width: `${(100.5 / TOTAL_BARS) * 100}%` }}
    />
    {Array.from({ length: 31 }, (_, i) => i * 4 + 1).map((bar) => (
      <span key={bar} className={clsx('relative flex-1', bar > 7 && bar < 108 ? 'text-[#f3b9b7]' : 'text-[#8b979d]')}>{bar}</span>
    ))}
    <svg viewBox="0 0 14 10" className="absolute top-[2px] -ml-[7px] w-[14px] h-[10px]" style={{ left: `${(6 / TOTAL_BARS) * 100}%` }}>
      <path d="M1 0h12v3L7 9.500L1 3z" fill="#a6e23c" stroke="#33481a" />
    </svg>
  </div>
);

const Overview = () => (
  <div className="flex h-[19px]">
    <button className="w-5 bg-[#4b555c] border border-[#353e44] flex items-center justify-center" aria-label="Scroll left">
      <svg viewBox="0 0 6 10" className="w-[6px] h-[10px]" fill="none" stroke="#20282d" strokeWidth="1.500"><path d="M5 1L1 5L5 9" /></svg>
    </button>
    <div className="flex-1 bg-[#343d43] flex">
      <div className="w-[89%] bg-[#51626a] border border-[#65757c]">
        <svg viewBox="0 0 124 60" preserveAspectRatio="none" className="w-full h-full opacity-80">
          {clips.map((c, i) => (
            <rect key={i} x={c.start - 1} y={c.track - 2} width={c.len} height={c.tone === 'yellow' ? 3 : 1.3} fill={FILLS[c.tone]} />
          ))}
        </svg>
      </div>
    </div>
    <button className="w-[19px] bg-[#4b555c] border border-[#353e44] flex items-center justify-center" aria-label="Scroll right">
      <svg viewBox="0 0 6 10" className="w-[6px] h-[10px]" fill="none" stroke="#20282d" strokeWidth="1.500"><path d="M1 1L5 5L1 9" /></svg>
    </button>
  </div>
);

const TrackTab = () => (
  <div className="relative w-[111px] h-[39px] shrink-0">
    <svg viewBox="0 0 111 39" className="absolute inset-0 w-full h-full">
      <path d="M0 39L16 4Q18 .5 22 .5H110.500V39z" fill="#525c62" stroke="#262e34" />
    </svg>
    <div className="relative h-full flex flex-col items-end pr-[6px] pt-[3px] text-[#6f7a80]">
      <div className="flex items-center gap-[9px]">
        <Wave className="w-5 h-[14px]" />
        <Nodes className="w-[17px] h-[13px] text-[#e4eaec]" />
        <Keys className="w-[15px] h-3" />
      </div>
      <div className="flex items-center text-[8px] font-bold text-[#c6cfd3] mt-[6px]">
        <label className="flex items-center gap-[2px]">
          STEP
          <input type="checkbox" className="appearance-none size-[11px] rounded-sm border border-[#c6cfd3]" />
        </label>
        <label className="flex items-center gap-[3px] ml-[5px]">
          SLIDE
          <input type="radio" defaultChecked className="appearance-none size-2 rounded-full border-2 border-[#3a4348] bg-[#e4eaec]" />
        </label>
      </div>
    </div>
  </div>
);

const Playlist = () => (
  <section className="flex-1 flex min-w-0">
    <div className="flex-1 flex flex-col min-w-0">
      <div className="flex h-[39px] shrink-0">
        <TrackTab />
        <div className="flex-1 flex flex-col border-t border-[#262e34]">
          <Overview />
          <Ruler />
        </div>
      </div>
      <div className="relative flex-1 min-h-0 overflow-hidden border-b border-[#1e272d]">
        <Grid />
        <div className="relative -mt-1 flex flex-col">
          {tracks.map((n) => <TrackRow key={n} n={n} />)}
        </div>
      </div>
    </div>
    <div className="w-5 shrink-0 flex flex-col bg-[#2e363c] pt-px">
      <button aria-label="Zoom" className="h-[19px] bg-[#4b555c] border border-[#353e44] text-[11px] leading-none text-[#20282d]">-</button>
      <button aria-label="Scroll up" className="h-[19px] mt-px bg-[#4b555c] border border-[#353e44] flex items-center justify-center">
        <svg viewBox="0 0 10 6" className="w-[10px] h-[6px]" fill="none" stroke="#20282d" strokeWidth="1.500"><path d="M1 5L5 1L9 5" /></svg>
      </button>
      <div className="flex-1 bg-[#39424a] pt-[2px]"><div className="h-[34px] bg-[#555f66] border border-[#646e75]" /></div>
      <button aria-label="Scroll down" className="h-[19px] bg-[#4b555c] border border-[#353e44] flex items-center justify-center">
        <svg viewBox="0 0 10 6" className="w-[10px] h-[6px]" fill="none" stroke="#20282d" strokeWidth="1.500"><path d="M1 1L5 5L9 1" /></svg>
      </button>
    </div>
  </section>
);

export default function App() {
  return (
    <div className={'h-screen w-full flex flex-col overflow-hidden bg-[#434c52] font-["Roboto_Condensed","Roboto",sans-serif]'}>
      <header className="relative bg-[#5b646a] shrink-0">
        <TransportRow />
        <PatternRow />
        <svg viewBox="0 0 50 76" className="absolute right-5 top-[3px] w-[50px] h-[76px]" fill="#3f484e">
          <path d="M3 16Q8 6 18 10Q22 13 23 18Q30 12 38 18Q40 22 46 24Q50 32 47 38L42 32L39 36Q30 36 23 36Q17 30 19 22L14 23L9 19L4 23Q2 20 3 16z" />
          <path d="M42 1Q33 8 31 18M42 34Q39 52 30 62Q18 76 9 70" fill="none" stroke="#3f484e" strokeWidth="1.500" />
        </svg>
      </header>
      <main className="flex-1 min-h-0 flex bg-[#434b51]">
        <div className="w-2 shrink-0 border-r border-[#343c42] flex flex-col justify-center gap-[3px] items-center">
          {[0, 1, 2, 3].map((i) => <span key={i} className="size-[2px] bg-[#262e34]" />)}
        </div>
        <div className="flex-1 flex flex-col min-w-0 min-h-0">
          <TitleBar />
          <div className="flex-1 flex min-h-0">
            <PatternBrowser />
            <Playlist />
          </div>
        </div>
      </main>
    </div>
  );
}
